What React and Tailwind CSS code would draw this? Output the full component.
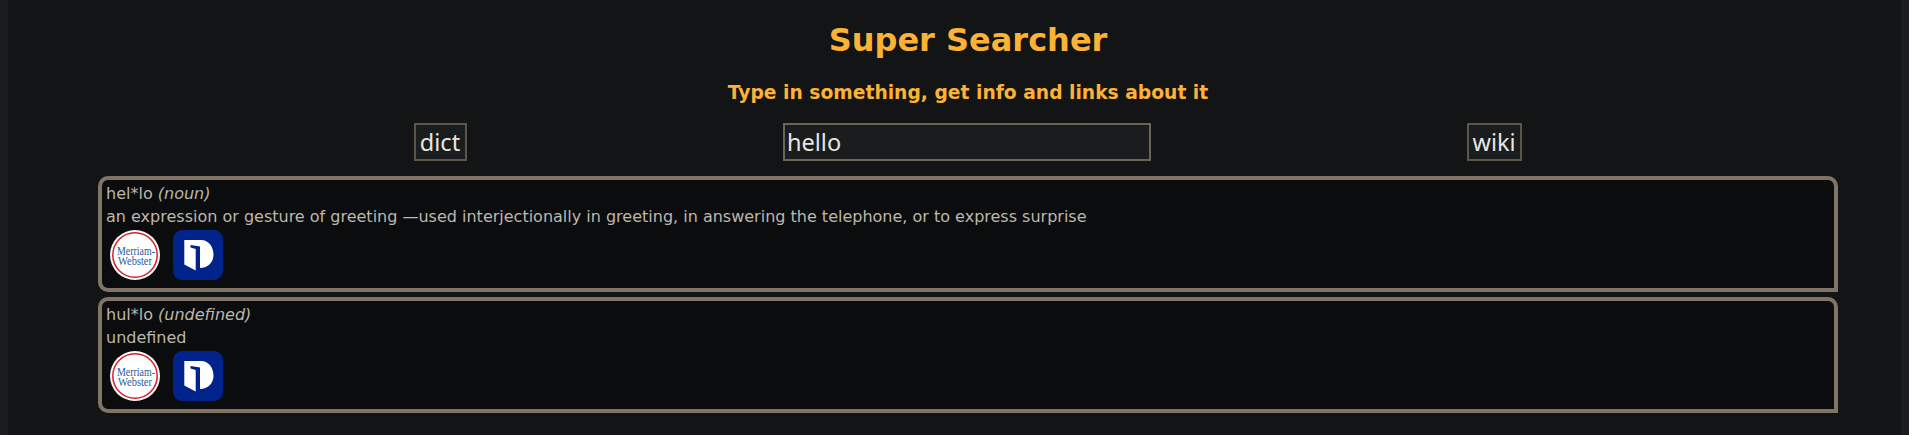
const MW = () => (
  <svg viewBox="0 0 50 50" className="w-[50px] h-[50px] block">
    <circle cx="25" cy="25" r="25" fill="#fff" />
    <circle cx="25" cy="25" r="22.2" fill="none" stroke="#d71f2b" strokeWidth="1.5" />
    <text x="26" y="25" textAnchor="middle" fontFamily="Liberation Serif, serif" fontSize="11.5" textLength="38" lengthAdjust="spacingAndGlyphs" fill="#1f5c99">Merriam-</text>
    <text x="25" y="35" textAnchor="middle" fontFamily="Liberation Serif, serif" fontSize="11.5" textLength="34" lengthAdjust="spacingAndGlyphs" fill="#1f5c99">Webster</text>
  </svg>
);

const Dict = () => (
  <svg viewBox="0 0 50 50" className="w-[50px] h-[50px] block">
    <rect width="50" height="50" rx="9" fill="#00248b" />
    <path d="M11.3 10 H28 C36 10 40.5 17 40.5 25 C40.5 32 35 38 27 38 V16.5 L17.5 15 V17.5 L22.7 19 V40.5 L11.3 34.5 Z" fill="#fff" />
  </svg>
);

const Card = ({ word, pos, def }) => (
  <div className="h-[116px] border-4 border-[#807565] rounded-[10px] rounded-br-none bg-[#0b0c0e] px-[4px] pt-[2px] text-[#bdb7ab] text-[16px] leading-[23px]">
    <div>{word} <em>({pos})</em></div>
    <div>{def}</div>
    <div className="flex gap-[13px] pl-[4px] pt-[2px]">
      <MW />
      <Dict />
    </div>
  </div>
);

export default function App() {
  return (
    <div className="h-[435px] overflow-hidden bg-[#1a1c1e] px-[8px] font-['DejaVu_Sans',sans-serif]">
      <div className="h-[435px] bg-[#131416] pl-[90px] pr-[63px]">
        <h1 className="pt-[22px] text-center text-[32px] leading-[37px] font-bold text-[#fcb335]">Super Searcher</h1>
        <h3 className="mt-[23px] text-center text-[18.72px] leading-[22px] font-bold text-[#fcb335]">Type in something, get info and links about it</h3>
        <div className="grid grid-cols-3 w-[1581px] mx-auto mt-[19px] -translate-x-px justify-items-center font-['Noto_Sans',sans-serif] text-[23.5px] leading-[32px] text-[#e8e6e3]">
          <button className="h-[38px] w-[53px] border-[2px] border-[#5c5648] bg-[#1a1c1e]">dict</button>
          <input readOnly value="hello" className="h-[38px] w-[368px] border-[2px] border-[#6b6558] bg-[#1a1c1e] px-[2px] outline-none" />
          <button className="h-[38px] w-[55px] border-[2px] border-[#5c5648] bg-[#1a1c1e]">wiki</button>
        </div>
        <div className="mt-[15px] flex flex-col gap-[5px]">
          <Card word="hel*lo" pos="noun" def="an expression or gesture of greeting —used interjectionally in greeting, in answering the telephone, or to express surprise" />
          <Card word="hul*lo" pos="undefined" def="undefined" />
        </div>
      </div>
    </div>
  );
}
